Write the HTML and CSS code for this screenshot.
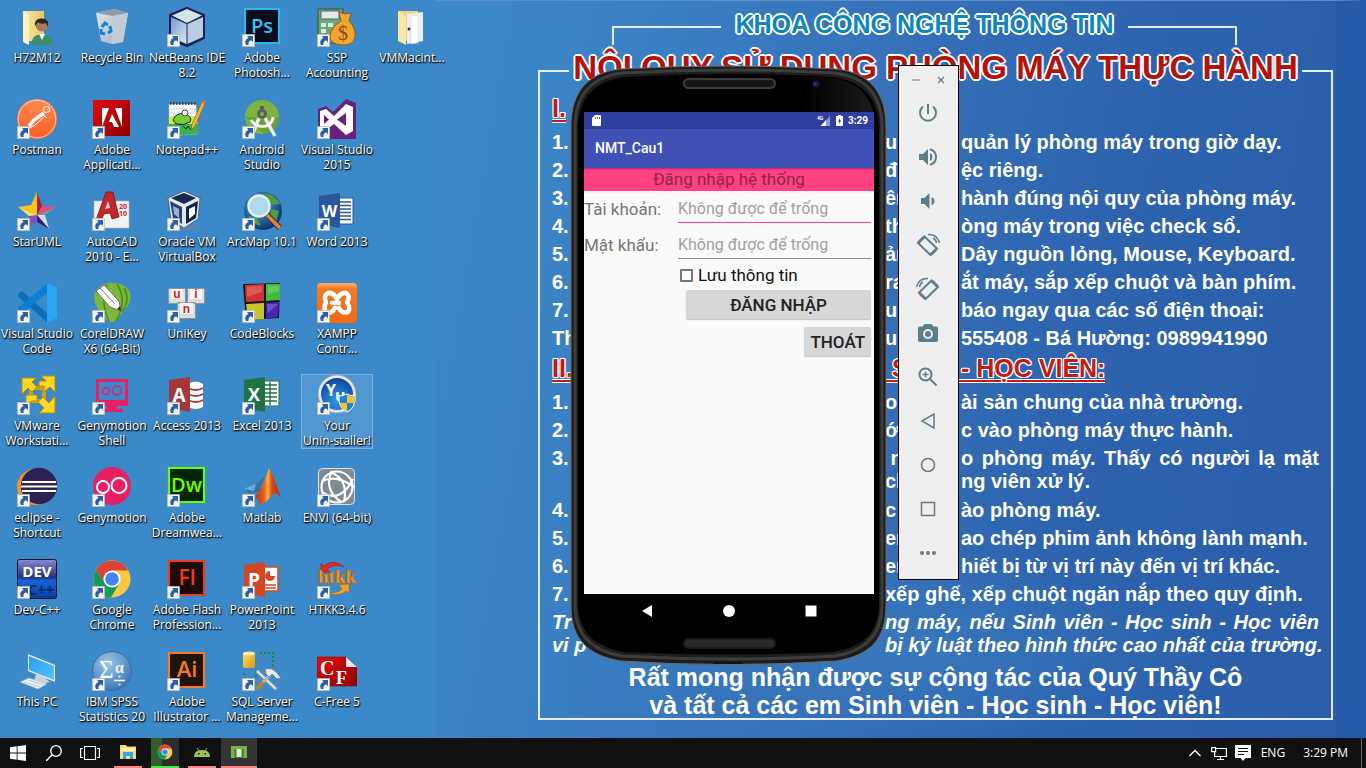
FILE: index.html
```html
<!DOCTYPE html>
<html lang="vi">
<head>
<meta charset="utf-8">
<title>Desktop</title>
<link rel="stylesheet" href="styles.css">
</head>
<body>
<svg class="defs" width="0" height="0" aria-hidden="true">
  <defs>
    <symbol id="sc" viewBox="0 0 13 13"><path fill="#f4f4f2" stroke="#b9b9b9" stroke-width=".8" d="M.4.4h12.2v12.2H.4z"/><path fill="#2b5ea8" d="M5 2h6v6L9 6.300Q6 7.500 6.500 11H4Q1.500 6.500 6.500 3.700Z"/></symbol>
    <linearGradient id="gGlass" x1="0" y1="0" x2="1" y2="1"><stop offset="0" stop-color="#dfe6ec"/><stop offset="1" stop-color="#a4b1bc"/></linearGradient>
    <linearGradient id="gPost" x1="0" y1="0" x2="0" y2="1"><stop offset="0" stop-color="#ff8a4e"/><stop offset="1" stop-color="#fb5f27"/></linearGradient>
    <linearGradient id="gRed" x1="0" y1="0" x2="1" y2="1"><stop offset="0" stop-color="#e40c0c"/><stop offset="1" stop-color="#8d0000"/></linearGradient>
    <linearGradient id="gGold" x1="0" y1="0" x2="1" y2="1"><stop offset="0" stop-color="#ffe35a"/><stop offset="1" stop-color="#d89412"/></linearGradient>
    <linearGradient id="gFolder" x1="0" y1="0" x2="1" y2="0"><stop offset="0" stop-color="#fce9a8"/><stop offset="1" stop-color="#e9c763"/></linearGradient>
    <linearGradient id="gXampp" x1="0" y1="0" x2="0" y2="1"><stop offset="0" stop-color="#ffb27a"/><stop offset=".15" stop-color="#f47a20"/><stop offset="1" stop-color="#f26a11"/></linearGradient>
    <linearGradient id="gDev" x1="0" y1="0" x2="0" y2="1"><stop offset="0" stop-color="#8a8ad0"/><stop offset=".45" stop-color="#28307e"/><stop offset=".55" stop-color="#1464d8"/><stop offset="1" stop-color="#0b3d9c"/></linearGradient>
    <linearGradient id="gMat" x1="0" y1="0" x2="1" y2="0"><stop offset="0" stop-color="#b03a1c"/><stop offset=".35" stop-color="#e8601f"/><stop offset=".5" stop-color="#ffb040"/><stop offset=".65" stop-color="#d8481c"/><stop offset="1" stop-color="#a72c16"/></linearGradient>
    <linearGradient id="gCube" x1="0" y1="0" x2="1" y2="1"><stop offset="0" stop-color="#6f9bd0"/><stop offset="1" stop-color="#dbe7f2"/></linearGradient>
    <radialGradient id="gYu" cx=".5" cy=".7" r=".7"><stop offset="0" stop-color="#2f9be8"/><stop offset="1" stop-color="#0c3f96"/></radialGradient>
    <radialGradient id="gGlobe" cx=".4" cy=".35" r=".7"><stop offset="0" stop-color="#4aa8e8"/><stop offset="1" stop-color="#08306c"/></radialGradient>
    <radialGradient id="gSpss" cx=".4" cy=".3" r=".8"><stop offset="0" stop-color="#9cc8ea"/><stop offset="1" stop-color="#2f6fb0"/></radialGradient>
    <linearGradient id="gScreen" x1="0" y1="0" x2="1" y2="1"><stop offset="0" stop-color="#2b9cf0"/><stop offset="1" stop-color="#58c0ff"/></linearGradient>
    <symbol id="chrome" viewBox="0 0 40 40"><circle cx="20" cy="20" r="18.500" fill="#fbc940"/><path fill="#db4437" d="M4 10.800A18.500 18.500 0 0 1 36.300 11.500H20L12 24.500Z"/><path fill="#0f9d58" d="M4 10.800 12.500 24.300 27.500 24 19 38.500A18.500 18.500 0 0 1 4 10.800Z"/><circle cx="20" cy="20" r="8.600" fill="#fff"/><circle cx="20" cy="20" r="6.800" fill="#4285f4"/></symbol>
  </defs>
</svg>

<div class="screen">
<main class="desktop">

  <section class="poster" aria-label="Nội quy phòng máy">
    <div class="crown"><i class="bracket bl"></i><h2>KHOA CÔNG NGHỆ THÔNG TIN</h2><i class="bracket br"></i></div>
    <div class="banner"><i class="corner bl"></i><h1>NỘI QUY SỬ DỤNG PHÒNG MÁY THỰC HÀNH</h1><i class="corner br"></i></div>
    <div class="rules">
      <h3 class="part short"><span>I.</span></h3>
      <p class="rule"><span>1.</span><span>u</span><span>quản lý phòng máy trong giờ dạy.</span></p>
      <p class="rule"><span>2.</span><span>đi</span><span>ệc riêng.</span></p>
      <p class="rule"><span>3.</span><span>ên</span><span>hành đúng nội quy của phòng máy.</span></p>
      <p class="rule"><span>4.</span><span>th</span><span>òng máy trong việc check sổ.</span></p>
      <p class="rule"><span>5.</span><span>ản</span><span>Dây nguồn lỏng, Mouse, Keyboard.</span></p>
      <p class="rule"><span>6.</span><span>ra</span><span>ắt máy, sắp xếp chuột và bàn phím.</span></p>
      <p class="rule"><span>7.</span><span>u</span><span>báo ngay qua các số điện thoại:</span></p>
      <p class="rule"><span>Th</span><span>uc</span><span>555408 - Bá Hường: 0989941990</span></p>
      <h3 class="part rule"><span>II.</span><span>&nbsp;S</span><span>- HỌC VIÊN:</span></h3>
      <p class="rule"><span>1.</span><span>o</span><span>ài sản chung của nhà trường.</span></p>
      <p class="rule"><span>2.</span><span>ớ</span><span>c vào phòng máy thực hành.</span></p>
      <p class="rule tight spread"><span>3.</span><span>&nbsp;n</span><span>o phòng máy. Thấy có người lạ mặt</span></p>
      <p class="rule tight"><span></span><span>ch</span><span>ng viên xử lý.</span></p>
      <p class="rule"><span>4.</span><span>c u</span><span>ào phòng máy.</span></p>
      <p class="rule"><span>5.</span><span>en</span><span>ao chép phim ảnh không lành mạnh.</span></p>
      <p class="rule"><span>6.</span><span>en</span><span>hiết bị từ vị trí này đến vị trí khác.</span></p>
      <p class="rule wide"><span>7.</span><span>xếp ghế, xếp chuột ngăn nắp theo quy định.</span></p>
      <p class="rule wide tight slant spread"><span>Tr</span><span>ng máy, nếu Sinh viên - Học sinh - Học viên</span></p>
      <p class="rule wide tight slant"><span>vi p</span><span>bị kỷ luật theo hình thức cao nhất của trường.</span></p>
      <p class="closing">Rất mong nhận được sự cộng tác của Quý Thầy Cô<br>và tất cả các em Sinh viên - Học sinh - Học viên!</p>
    </div>
  </section>

  <nav class="icons" aria-label="Desktop">
    <a class="item" href="#"><span class="pic"><svg viewBox="0 0 40 40"><path fill="url(#gFolder)" d="M6 4h21v30H6z"/><path fill="#fff3c4" d="M6 4 12 8V38L6 35Z"/><circle cx="25" cy="18" r="6.500" fill="#a8795c"/><path fill="#2b2622" d="M18 19Q17 11 25 11.500 33 12 31 20L29 16Q24 18 21 15Z"/><path fill="#3a8f6c" d="M14 38Q15 27 25 27 35 27 36 38Z"/><path fill="#fff" d="M22 27h6l-3 6z"/></svg></span><span class="label">H72M12</span></a>
    <a class="item" href="#"><span class="pic"><svg viewBox="0 0 40 40"><path fill="url(#gPost)" d="M20 0a20 20 0 1 0 0 40 20 20 0 0 0 0-40"/><circle cx="20" cy="20" r="18.800" fill="none" stroke="#ffd9c6" stroke-width=".8"/><path fill="none" stroke="#fff" stroke-width="3.600" d="M27 14 17 21 12 27"/><path fill="none" stroke="#fff" stroke-width="1" d="M28 17 18 26 9 31M24 14l6 5"/><circle cx="29.500" cy="10.500" r="3.200" fill="#ff8a58" stroke="#fff"/></svg><svg class="arrow"><use href="#sc"/></svg></span><span class="label">Postman</span></a>
    <a class="item" href="#"><span class="pic"><svg viewBox="0 0 40 40"><path fill="#f7c51e" d="M20 1 14 14 1 16 20 24Z"/><path fill="#b01f2c" d="M20 1 20 24 25 15Z"/><path fill="#e34b7d" d="M25 15 39 16 20 24Z"/><path fill="#8f9296" d="M39 16 28 24 20 24Z"/><path fill="#d9dce0" d="M28 24 32 38 20 24Z"/><path fill="#33216e" d="M20 24V31L32 38Z"/><path fill="#7e50c8" d="M20 24V31L8 38 12 25Z"/><path fill="#ffdf60" d="M1 16 20 24 12 25Z"/></svg><svg class="arrow"><use href="#sc"/></svg></span><span class="label">StarUML</span></a>
    <a class="item" href="#"><span class="pic"><svg viewBox="0 0 40 40"><path fill="#0a6fb8" d="M1 11 5 8 31 31V40L1 13.500Z"/><path fill="#0d7fce" d="M1 27 5 31 31 9V0L1 24.500Z"/><path fill="#29a5f2" d="M30 0 40 5V35L30 40Z"/></svg><svg class="arrow"><use href="#sc"/></svg></span><span class="label">Visual Studio<br>Code</span></a>
    <a class="item" href="#"><span class="pic"><svg viewBox="0 0 40 40"><path fill="none" stroke="#d99e0a" stroke-width="4" d="M14 13h13v13H14z"/><g fill="#fbd824" stroke="#b98a08" stroke-width="1"><path d="M5 3h14l-4 4 5 5-5 5-4-4-6 6Z"/><path d="M38 1v16l-5-5-6 5v-6h-5V6h7l-5-5Z"/><path d="M38 21v17H22l5-5-6-6 5-5 6 6Z"/><path d="M9 20h11v6h-5l-6 3Z"/></g></svg><svg class="arrow"><use href="#sc"/></svg></span><span class="label">VMware<br>Workstati...</span></a>
    <a class="item" href="#"><span class="pic"><svg viewBox="0 0 40 40"><circle cx="18" cy="20" r="18" fill="#f7941e"/><circle cx="22" cy="19" r="18.200" fill="#2c2255"/><path stroke="#fff" stroke-width="2.200" d="M5 15h34M4 19.500h36M5 24h34"/></svg><svg class="arrow"><use href="#sc"/></svg></span><span class="label">eclipse -<br>Shortcut</span></a>
    <a class="item" href="#"><span class="pic"><svg viewBox="0 0 40 40"><rect x=".5" y=".5" width="39" height="39" rx="2" fill="url(#gDev)" stroke="#11151f"/><text x="20" y="18" text-anchor="middle" font-family="Open Sans" font-weight="700" font-size="15" fill="#fff">DEV</text><text x="24" y="36" text-anchor="middle" font-family="Open Sans" font-weight="700" font-size="15" fill="#082a66">C++</text></svg><svg class="arrow"><use href="#sc"/></svg></span><span class="label">Dev-C++</span></a>
    <a class="item" href="#"><span class="pic"><svg viewBox="0 0 40 40"><path fill="#e8eef3" d="M11 3 38 14V31L11 20Z"/><path fill="url(#gScreen)" d="M12 5 37 15V29L12 19Z"/><path fill="#c9d2da" d="M19 23 27 26 33 31 25 33 17 30Z"/><path fill="#edf1f4" stroke="#a9b4bd" stroke-width=".6" d="M3 31 12 27 30 33 21 38Z"/><path stroke="#9fb0bd" stroke-width=".6" d="M7 31l16 5M11 29l16 5"/></svg></span><span class="label">This PC</span></a>

    <a class="item" href="#"><span class="pic"><svg viewBox="0 0 40 40"><path fill="url(#gGlass)" d="M4 6 22 2 36 6 31 35 20 37 9 34Z"/><path fill="#8f9daa" d="M4 6 22 2 36 6 21 9Z"/><path fill="#c2ccd5" d="M21 9 36 6 31 35 20 37Z"/><g fill="none" stroke="#1482d8" stroke-width="3"><path d="M10 20l3-4 3 2M18 19l1 5-3 2M13 27l-4-1v-4"/></g></svg></span><span class="label">Recycle Bin</span></a>
    <a class="item" href="#"><span class="pic"><svg viewBox="0 0 40 40"><path fill="url(#gRed)" d="M1 1h37v36H1z"/><path fill="#fff" d="M10 9h7L10 28ZM23 9h7V28ZM20 15 27 28H22L20 23H17Z"/></svg><svg class="arrow"><use href="#sc"/></svg></span><span class="label">Adobe<br>Applicati...</span></a>
    <a class="item" href="#"><span class="pic"><svg viewBox="0 0 40 40"><path fill="#f1f1f1" stroke="#bbb" stroke-width=".6" d="M2 10h35v27H2z"/><path fill="#c3272b" stroke="#7c1416" stroke-width=".8" d="M14 1H21L27 26 20 28 18 22 12 23 9 30 4 29Z"/><path fill="#f1d5d5" d="M16 10 18 17 13 18Z"/><text x="27" y="18" font-family="Open Sans" font-weight="700" font-size="7" fill="#c3272b">20</text><text x="27" y="25" font-family="Open Sans" font-weight="700" font-size="7" fill="#c3272b">10</text></svg><svg class="arrow"><use href="#sc"/></svg></span><span class="label">AutoCAD<br>2010 - E...</span></a>
    <a class="item" href="#"><span class="pic"><svg viewBox="0 0 40 40"><path fill="#7cb93a" d="M20 0C42 0 42 18 32 28 27 33 25 39 20 39S11 33 7 27C-3 15 3 0 20 0"/><path fill="none" stroke="#4d8a20" stroke-width="1.500" d="M25 1Q36 18 24 38M15 1Q8 20 17 38M32 5Q39 17 30 29"/><path fill="#fff" stroke="#555" stroke-width=".8" d="M4 8 12 2 27 18 29 28 18 24Z"/><path stroke="#777" d="M8 5 23 21"/><path fill="#333" d="M29 28l-4-2 3-3z"/></svg><svg class="arrow"><use href="#sc"/></svg></span><span class="label">CorelDRAW<br>X6 (64-Bit)</span></a>
    <a class="item" href="#"><span class="pic"><svg viewBox="0 0 40 40"><path fill="none" stroke="#e91e63" stroke-width="3" d="M5.500 5.500h29v24h-29z"/><path fill="#e91e63" d="M4 25h32v6H4zM15 31h10v3h6v3H9v-3h6z"/><g fill="none" stroke="#e91e63" stroke-width="1.500"><circle cx="14" cy="16" r="3.500"/><circle cx="25" cy="15.500" r="4.500"/></g></svg><svg class="arrow"><use href="#sc"/></svg></span><span class="label">Genymotion<br>Shell</span></a>
    <a class="item" href="#"><span class="pic"><svg viewBox="0 0 40 40"><circle cx="20" cy="19" r="19" fill="#e91e63"/><g fill="none" stroke="#fff" stroke-width="2"><circle cx="11" cy="20" r="6"/><circle cx="27" cy="18.500" r="7.500"/></g></svg><svg class="arrow"><use href="#sc"/></svg></span><span class="label">Genymotion</span></a>
    <a class="item" href="#"><span class="pic"><svg viewBox="0 0 40 40"><use href="#chrome"/></svg><svg class="arrow"><use href="#sc"/></svg></span><span class="label">Google<br>Chrome</span></a>
    <a class="item" href="#"><span class="pic"><svg viewBox="0 0 40 40"><circle cx="20" cy="20" r="19.500" fill="url(#gSpss)" stroke="#3b6ea5"/><text x="7" y="27" font-family="Liberation Serif" font-size="25" fill="#fff">Σ</text><text x="23" y="22" font-family="Liberation Serif" font-weight="700" font-size="16" fill="#e8f3fb">α</text><path stroke="#fff" stroke-width="1.500" d="M22 29.500h11M26.500 25.500h2M26.500 33.500h2"/></svg><svg class="arrow"><use href="#sc"/></svg></span><span class="label">IBM SPSS<br>Statistics 20</span></a>

    <a class="item" href="#"><span class="pic"><svg viewBox="0 0 40 40"><path fill="#1b1f55" stroke="#1b1f55" stroke-width="2" stroke-linejoin="round" d="M20 1 37 8V31L20 39 3 32V8Z"/><path fill="#cfe6e2" d="M20 2 35 8.500 20 16 5 8.500Z"/><path fill="url(#gCube)" d="M4 10 19.500 17V37L4 30.500Z"/><path fill="#b9cde4" d="M20.500 17 36 10V30L20.500 37Z"/></svg><svg class="arrow"><use href="#sc"/></svg></span><span class="label">NetBeans IDE<br>8.2</span></a>
    <a class="item" href="#"><span class="pic"><svg viewBox="0 0 40 40"><path fill="#fdfdfd" stroke="#aaa" stroke-width=".6" d="M2 5h27l2 30-29 2Z"/><path fill="#d3ea48" d="M2 17h28v8H2z"/><path fill="#35b44a" d="M2 25h29v10l-29 2z"/><path stroke="#333" stroke-dasharray="1.500 1.500" stroke-width="2.500" d="M3 4.500h26"/><path stroke="#a9c4e8" stroke-width=".7" d="M3 10h26M3 14h26"/><path fill="#78cf3c" stroke="#222" stroke-width="1" d="M6 21Q9 13 18 15 26 18 23 23 17 27 9 25Z"/><circle cx="18" cy="14" r="3" fill="#fff" stroke="#222" stroke-width=".8"/><path fill="none" stroke="#222" d="M16 27l3 3 2-3 3 4 2-3"/><path fill="#f5b62c" stroke="#8e5a10" stroke-width=".6" d="M35 3l3 1.500L28 27l-4 4 1-6Z"/><path fill="#d86a5f" d="M35 3l1-2 3 1-1 2.500z"/></svg><svg class="arrow"><use href="#sc"/></svg></span><span class="label">Notepad++</span></a>
    <a class="item" href="#"><span class="pic"><svg viewBox="0 0 40 40"><ellipse cx="19" cy="36" rx="11" ry="3.500" fill="#5d7fae"/><path fill="#dfe7f0" stroke="#23395f" stroke-width=".6" d="M17 0 33 7 31 28 17 37 4 29 1 7Z"/><path fill="#16294c" d="M17 2 29 7 17 13 4 7Z"/><path fill="#2a4474" d="M3 10 15 16V33L6 27Z"/><path fill="#122340" d="M19 16 31 10 29 27 19 33Z"/><path fill="#fff" d="M22 18 28 15V23L22 28Z"/><path fill="#9fb3d0" d="M6 15 12 18V27L7 23Z"/></svg><svg class="arrow"><use href="#sc"/></svg></span><span class="label">Oracle VM<br>VirtualBox</span></a>
    <a class="item" href="#"><span class="pic"><svg viewBox="0 0 40 40"><g fill="#dedede" stroke="#8e8e8e" stroke-width=".8"><path d="M1.500 5.500h17v15h-17zM20.500 5.500h17v15h-17zM10.500 19.500h18v16h-18z"/></g><path fill="#f6f6f6" d="M4 6h12v10H4zM23 6h12v10H23zM13 20h13v11H13z"/><g font-family="Liberation Sans" font-weight="700" font-size="12" fill="#e01818" text-anchor="middle"><text x="10" y="15">u</text><text x="29" y="15">i</text><text x="19.500" y="30">n</text></g></svg><svg class="arrow"><use href="#sc"/></svg></span><span class="label">UniKey</span></a>
    <a class="item" href="#"><span class="pic"><svg viewBox="0 0 40 40"><path fill="#fff" d="M21 9Q29 4 36 9V32Q29 36 21 32Z"/><path fill="none" stroke="#a4373a" stroke-width="1.800" d="M21 13Q29 17 36 13M21 19Q29 23 36 19M21 25Q29 29 36 25"/><path fill="#a4373a" d="M2 5 23 2V37L2 33Z"/><text x="12" y="27" text-anchor="middle" font-family="Open Sans" font-weight="700" font-size="19" fill="#fff">A</text></svg><svg class="arrow"><use href="#sc"/></svg></span><span class="label">Access 2013</span></a>
    <a class="item" href="#"><span class="pic"><svg viewBox="0 0 40 40"><path fill="#072401" stroke="#6aff00" stroke-width="2.200" d="M2 1h35v34H2z"/><text x="19.500" y="25" text-anchor="middle" font-family="Open Sans" font-weight="600" font-size="20" fill="#6aff00">Dw</text></svg><svg class="arrow"><use href="#sc"/></svg></span><span class="label">Adobe<br>Dreamwea...</span></a>
    <a class="item" href="#"><span class="pic"><svg viewBox="0 0 40 40"><path fill="#1b0c0c" stroke="#f23a14" stroke-width="2.200" d="M2 2h35v34H2z"/><text x="20" y="26" text-anchor="middle" font-family="Open Sans" font-weight="600" font-size="21" fill="#f23a14">Fl</text></svg><svg class="arrow"><use href="#sc"/></svg></span><span class="label">Adobe Flash<br>Profession...</span></a>
    <a class="item" href="#"><span class="pic"><svg viewBox="0 0 40 40"><path fill="#1e140b" stroke="#f87a1e" stroke-width="2.200" d="M2 2h35v34H2z"/><text x="20" y="26" text-anchor="middle" font-family="Open Sans" font-weight="600" font-size="22" fill="#f87a1e">Ai</text></svg><svg class="arrow"><use href="#sc"/></svg></span><span class="label">Adobe<br>Illustrator ...</span></a>

    <a class="item" href="#"><span class="pic"><svg viewBox="0 0 40 40"><path fill="#0c0c1f" stroke="#28b9e9" stroke-width="2.200" d="M3 2h34v34H3z"/><text x="20" y="26" text-anchor="middle" font-family="Open Sans" font-weight="600" font-size="20" fill="#31c5f0">Ps</text></svg><svg class="arrow"><use href="#sc"/></svg></span><span class="label">Adobe<br>Photosh...</span></a>
    <a class="item" href="#"><span class="pic"><svg viewBox="0 0 40 40"><circle cx="20" cy="18" r="17" fill="#7fb341"/><path fill="#6fa036" d="M3 18h34A17 17 0 0 1 22 35Z"/><circle cx="20" cy="15" r="3.500" fill="none" stroke="#5a5f62" stroke-width="3"/><path fill="#5a5f62" d="M18 7h4v4h-4z"/><path fill="none" stroke="#ededed" stroke-width="3.500" d="M17 19 11 34M23 19 33 37"/><path fill="none" stroke="#f4f4f4" stroke-width="3" d="M9 21Q14 29 24 27 31 24 31 18"/></svg><svg class="arrow"><use href="#sc"/></svg></span><span class="label">Android<br>Studio</span></a>
    <a class="item" href="#"><span class="pic"><svg viewBox="0 0 40 40"><circle cx="21" cy="20" r="19" fill="url(#gGlobe)"/><path fill="#4d9d45" d="M22 2Q33 3 38 13L31 14 26 9ZM29 18l8 2-3 11-6-3ZM6 25l9 2 4 8-9-3Z"/><circle cx="17" cy="15" r="10.500" fill="#bfe6f4" fill-opacity=".85" stroke="#ececec" stroke-width="2.500"/><path stroke="#4a2a12" stroke-width="5.500" d="M25 24 38 37"/><path stroke="#d98642" stroke-width="3.500" d="M25 24 38 37"/></svg><svg class="arrow"><use href="#sc"/></svg></span><span class="label">ArcMap 10.1</span></a>
    <a class="item" href="#"><span class="pic"><svg viewBox="0 0 40 40"><path fill="#141414" d="M1 1 38 0 37 35 4 37Z"/><path fill="#d33232" d="M3 2 22 1V18L4 19Z"/><path fill="#3fbe3a" d="M24 1H38V17L24 18Z"/><path fill="#c9c42c" d="M4 21 22 20V36L6 37Z"/><path fill="#4a26b4" d="M24 20 37 19 36 34 24 36Z"/><path fill="#fff" fill-opacity=".2" d="M5 4 20 3V9L5 14ZM26 3H37V8L26 11ZM25 21 36 21 26 30Z"/></svg><svg class="arrow"><use href="#sc"/></svg></span><span class="label">CodeBlocks</span></a>
    <a class="item" href="#"><span class="pic"><svg viewBox="0 0 40 40"><path fill="#fff" stroke="#1f7244" d="M20 6h17v25H20z"/><path stroke="#1f7244" stroke-width="1.400" d="M22 10h13M22 14h13M22 18h13M22 22h13M22 26h13M28 7v23"/><path fill="#1f7244" d="M2 5 23 2V37L2 33Z"/><text x="12" y="26" text-anchor="middle" font-family="Open Sans" font-weight="700" font-size="18" fill="#fff">X</text></svg><svg class="arrow"><use href="#sc"/></svg></span><span class="label">Excel 2013</span></a>
    <a class="item" href="#"><span class="pic"><svg viewBox="0 0 40 40"><path fill="#3273a8" d="M1 22 14 17 23 9 17 25 8 27Z"/><path fill="#5fb0dc" d="M1 22 14 17 12 24Z"/><path fill="url(#gMat)" d="M13 30Q21 20 27 1 33 12 39 31 34 23 29 29 24 37 17 37 17 32 13 30"/></svg><svg class="arrow"><use href="#sc"/></svg></span><span class="label">Matlab</span></a>
    <a class="item" href="#"><span class="pic"><svg viewBox="0 0 40 40"><path fill="#fff" stroke="#d24726" stroke-width="1.500" d="M20 8h16v24H20z"/><circle cx="28" cy="17" r="5" fill="#d24726"/><path fill="#fff" d="M28 17v-6h6v6z"/><path stroke="#d24726" stroke-width="1.500" d="M22 26h12M22 29h12"/><path fill="#d24726" d="M2 6 23 3V38L2 34Z"/><text x="12" y="28" text-anchor="middle" font-family="Open Sans" font-weight="700" font-size="19" fill="#fff">P</text></svg><svg class="arrow"><use href="#sc"/></svg></span><span class="label">PowerPoint<br>2013</span></a>
    <a class="item" href="#"><span class="pic"><svg viewBox="0 0 40 40"><rect x="1" y="1" width="12" height="16" rx="2" fill="url(#gGold)"/><ellipse cx="7" cy="2.500" rx="6" ry="2" fill="#fff0a0"/><path fill="none" stroke="#1e8a2a" stroke-width="2" stroke-dasharray="2 2" d="M18 2h13v14M2 22v5M14 20v8"/><path stroke="#8c97a3" stroke-width="4" d="M15 20 34 38"/><path stroke="#dde5ec" stroke-width="2" d="M15 20 34 38"/><path stroke="#c08018" stroke-width="4" d="M15 38 22 30"/><path stroke="#aab6c2" stroke-width="3" d="M21 31 29 23"/><path fill="#e5ebf0" stroke="#687482" stroke-width=".8" d="M23 18Q30 16 35 22l4 5-4 1-5-5-3 3-3-3z"/></svg><svg class="arrow"><use href="#sc"/></svg></span><span class="label">SQL Server<br>Manageme...</span></a>

    <a class="item" href="#"><span class="pic"><svg viewBox="0 0 40 40"><path fill="#6fa77a" stroke="#3f6b49" stroke-width="1.500" d="M1 2h25v34H1z"/><path fill="#dfe9ee" stroke="#4d6470" d="M4 4h18v8H4z"/><path fill="#d7efd9" d="M4 16h5v4H4zM11 16h5v4h-5zM4 22h5v4H4z"/><path fill="#f2a52f" stroke="#9c5a0d" d="M22 5l6 2 6-1-2 8Q39 21 38 30 36 39 25 38 13 37 13 30 14 20 24 14Z"/><text x="26" y="33" text-anchor="middle" font-family="Liberation Serif" font-size="20" fill="#8a4a08">$</text></svg><svg class="arrow"><use href="#sc"/></svg></span><span class="label">SSP<br>Accounting</span></a>
    <a class="item" href="#"><span class="pic"><svg viewBox="0 0 40 40"><path fill="#68217a" d="M1 10 9 7 16 13 29 0 39 4V40H13V28L9 32 1 28Z"/><path fill="#fff" d="M3 12 9 10 17 17 29 5 36 8V32L29 36 17 25 9 31 3 28Z"/><path fill="#68217a" d="M7 16 12 20.500 7 25ZM29 14V27L20 20.500Z"/></svg><svg class="arrow"><use href="#sc"/></svg></span><span class="label">Visual Studio<br>2015</span></a>
    <a class="item" href="#"><span class="pic"><svg viewBox="0 0 40 40"><path fill="#fff" stroke="#2b579a" d="M20 7h16v26H20z"/><path stroke="#2b579a" stroke-width="1.500" d="M23 11h11M23 14.500h11M23 18h11M23 21.500h11M23 25h11M23 28.500h11"/><path fill="#2b579a" d="M2 5 23 2V37L2 33Z"/><text x="12.500" y="26" text-anchor="middle" font-family="Open Sans" font-weight="700" font-size="16" fill="#fff">W</text></svg><svg class="arrow"><use href="#sc"/></svg></span><span class="label">Word 2013</span></a>
    <a class="item" href="#"><span class="pic"><svg viewBox="0 0 40 40"><rect width="40" height="40" rx="4" fill="url(#gXampp)"/><g fill="none" stroke="#fff" stroke-width="4.500" stroke-linejoin="round" stroke-linecap="round"><path d="M20 16Q16 9 11 10 6 13 9 19 6 26 9 29 15 31 18 25"/><path d="M20 16Q24 9 29 10 34 13 30 19 34 26 31 29 25 31 22 25"/><path d="M15 20h7"/></g></svg><svg class="arrow"><use href="#sc"/></svg></span><span class="label">XAMPP<br>Contr...</span></a>
    <a class="item selected" href="#"><span class="pic"><svg viewBox="0 0 40 40"><circle cx="20" cy="19" r="17.500" fill="url(#gYu)" stroke="#e4e8ec" stroke-width="3"/><circle cx="20" cy="19" r="19" fill="none" stroke="#8e99a4" stroke-width=".7"/><text x="9" y="21" font-family="Open Sans" font-weight="700" font-size="16" fill="#fff">Y</text><text x="18" y="26" font-family="Open Sans" font-weight="700" font-size="16" fill="#fff">u</text><path fill="#1e86d8" stroke="#fff" d="M22 21q4 0 8-2 4 2 8 2 1 12-8 16-9-4-8-16Z"/><path fill="#fbc22e" d="M30 20q4 1.500 7.500 1.500v6.500H30zM22.500 28H30v8.500q-6-2-7.500-8.500Z"/></svg><svg class="arrow"><use href="#sc"/></svg></span><span class="label">Your<br>Unin-staller!</span></a>
    <a class="item" href="#"><span class="pic"><svg viewBox="0 0 40 40"><rect x="1.500" y="1.500" width="36" height="36" rx="4" fill="#7d8b95" stroke="#dce2e6"/><g fill="none" stroke="#fff" stroke-width="2.200"><circle cx="20" cy="20" r="15.500"/><path d="M5 14Q20 7 37 20M13 5Q32 12 27 35M15 4Q6 22 24 35M6 26Q24 36 36 12"/></g></svg><svg class="arrow"><use href="#sc"/></svg></span><span class="label">ENVI (64-bit)</span></a>
    <a class="item" href="#"><span class="pic"><svg viewBox="0 0 40 40"><path fill="#e8281e" stroke="#8d1510" stroke-width=".5" d="M4 13V4l3 3Q17-1 27 8 18 4 10 10l3 3Z"/><text x="20" y="24" text-anchor="middle" font-family="Liberation Serif" font-weight="700" font-size="19" fill="#ff9a10" stroke="#b65808" stroke-width=".5">htkk</text><path fill="#f5a01e" stroke="#a8650c" stroke-width=".5" d="M32 25v9l-3-2Q22 38 12 34q10 0 13-4l-3-4Z"/></svg><svg class="arrow"><use href="#sc"/></svg></span><span class="label">HTKK3.4.6</span></a>
    <a class="item" href="#"><span class="pic"><svg viewBox="0 0 40 40"><path fill="url(#gRed)" stroke="#7a0b0b" stroke-width=".6" d="M0 6h29l11 10v19H0z"/><path fill="#e9e9e9" d="M29 6v10h11z"/><g font-family="Liberation Serif" font-weight="700" fill="#fff"><text x="3" y="24" font-size="20">C</text><text x="19" y="33" font-size="18">F</text></g></svg><svg class="arrow"><use href="#sc"/></svg></span><span class="label">C-Free 5</span></a>

    <a class="item" href="#"><span class="pic"><svg viewBox="0 0 40 40"><path fill="#f3d27a" d="M6 4h20v30H6z"/><path fill="#eceff1" d="M15 7 31 5V34L15 37Z"/><path fill="#fff" stroke="#cfd4d8" stroke-width=".5" d="M19 9 26 8V36L19 37Z"/><path fill="#fae7a8" d="M6 4 14 9V38L6 34Z"/><circle cx="17" cy="22" r="1.500" fill="#333"/></svg></span><span class="label">VMMacint...</span></a>
  </nav>

  <section class="phone" aria-label="Android emulator">
    <svg class="shell" viewBox="0 0 318 601" preserveAspectRatio="none" aria-hidden="true">
      <defs><linearGradient id="gGloss" x1=".5" y1="0" x2="1" y2="0"><stop offset="0" stop-color="#000"/><stop offset="1" stop-color="#1b1b1b"/></linearGradient></defs>
      <path fill="#6f6a66" d="M315 40h1v70h-1zM315 200h2v32h-2z"/>
      <path fill="#1d1d1d" stroke="#716b66" stroke-width="1" d="M1 62C1 26 18 8 50 4Q158-2 267 4C299 8 316 26 316 62V540C316 575 300 590 267 596Q158 603 50 596C18 590 1 575 1 540Z"/>
      <path fill="none" stroke="#3d3d3d" stroke-width="3" d="M5 62C5 30 22 12 52 8Q158 2 265 8C295 12 312 30 312 62V540C312 570 296 586 265 591Q158 597 52 591C22 586 5 570 5 540Z"/>
      <path fill="#000" d="M8 64C8 32 26 16 54 12Q158 6 263 12C291 16 309 32 309 64V538C309 568 293 582 263 587Q158 592 54 587C26 582 8 568 8 538Z"/>
      <path fill="url(#gGloss)" d="M158 10Q220 9 263 13C287 17 304 31 305 60L300 62V47H158Z"/>
      <rect x="114" y="14" width="91" height="9" rx="4.500" fill="#161616" stroke="#3c3c3c" stroke-width="2"/>
      <rect x="114" y="574" width="91" height="9" rx="4.500" fill="#2a2a2a" stroke="#1b1b1b" stroke-width="2"/>
      <circle cx="246" cy="19" r="3.500" fill="#1a1a3c"/><circle cx="245" cy="19" r="1.500" fill="#33366a"/>
      <path fill="#111" d="M143 597h30v2h-30z"/>
    </svg>
    <div class="app">
      <header class="status"><svg class="sd" viewBox="0 0 9 11"><path fill="#fff" d="M3 0h5q1 0 1 1v9q0 1-1 1H1q-1 0-1-1V3z"/><path stroke="#2f3f9f" d="M3.500 2v2M5.500 2v2M7.500 2v2" stroke-width=".7"/></svg><svg class="sig" viewBox="0 0 13 11"><path fill="#8d97d0" d="M13 1v10h-9z"/><path fill="#fff" d="M9 5v6H3.500z"/><text x="0" y="5" font-family="Roboto" font-weight="700" font-size="5" fill="#fff">4G</text></svg><svg class="bat" viewBox="0 0 7 11"><path fill="#fff" d="M2 0h3v1h2v10H0V1h2z"/><path fill="#2f3f9f" d="M4 3 2 6.500h1.200V9L5.200 5.500H4z"/></svg><time>3:29</time></header>
      <h2 class="appbar">NMT_Cau1</h2>
      <p class="heading">Đăng nhập hệ thống</p>
      <form class="login">
        <label for="user">Tài khoản:</label><input class="field active" id="user" type="text" placeholder="Không được để trống">
        <label for="pass">Mật khẩu:</label><input class="field" id="pass" type="password" placeholder="Không được để trống">
        <label class="remember"><input type="checkbox">Lưu thông tin</label>
        <button class="btn signin" type="button">ĐĂNG NHẬP</button>
        <button class="btn quit" type="button">THOÁT</button>
      </form>
      <footer class="keys">
        <button type="button" aria-label="Back"><svg viewBox="0 0 12 12"><path d="M1 6 11 0v12z"/></svg></button>
        <button type="button" aria-label="Home"><svg viewBox="0 0 12 12"><circle cx="6" cy="6" r="6"/></svg></button>
        <button type="button" aria-label="Recents"><svg viewBox="0 0 12 12"><path d="M.5.500h11v11H.500z"/></svg></button>
      </footer>
    </div>
  </section>

  <aside class="tools" aria-label="Emulator controls">
    <div class="caption">
      <button type="button" aria-label="Minimize"><svg viewBox="0 0 8 8"><path d="M0 4h8" stroke="#8aa0aa" stroke-width="1.500"/></svg></button>
      <button type="button" aria-label="Close"><svg viewBox="0 0 8 8"><path d="M1 1l6 6M7 1 1 7" stroke="#61808c" stroke-width="1.300"/></svg></button>
    </div>
    <button type="button" aria-label="Power"><svg viewBox="0 0 24 24"><path class="ln" d="M12 3v10M7 5.500a8 8 0 1 0 10 0"/></svg></button>
    <button type="button" aria-label="Volume up"><svg viewBox="0 0 24 24"><path class="so" d="M3 9v6h4l5 5V4L7 9z"/><path class="so" d="M14 8v8q2.500-1 2.500-4T14 8z"/><path class="ln" d="M14 4.200Q20 6 20 12t-6 7.800"/></svg></button>
    <button type="button" aria-label="Volume down"><svg viewBox="0 0 24 24"><path class="so" d="M5 9v6h3.500l5 5V4l-5 5z"/><path class="so" d="M15.500 8v8q3-1 3-4t-3-4z"/></svg></button>
    <button type="button" aria-label="Rotate left"><svg viewBox="0 0 24 24"><path class="ln" d="M8.500 3.500 21 15.500 14.500 22 2 10z"/><path class="ln wd" d="M15 21.500 20.500 16M2.500 9.500 8 4"/><path class="ln th" d="M12 1.500Q21 1 23.500 10M17 5q3 1.500 3.500 5"/></svg></button>
    <button type="button" aria-label="Rotate right"><svg viewBox="0 0 24 24"><path class="ln" d="M15.500 3.500 3 15.500 9.500 22 22 10z"/><path class="ln wd" d="M9 21.500 3.500 16M21.500 9.500 16 4"/><path class="ln th" d="M12 1.500Q3 1 .500 10M7 5Q4 6.500 3.500 10"/></svg></button>
    <button type="button" aria-label="Screenshot"><svg viewBox="0 0 24 24"><path class="so" d="M8.500 3h7l2 2.500H20q2 0 2 2V19q0 2-2 2H4q-2 0-2-2V7.500q0-2 2-2h2.500z"/><circle cx="12" cy="13" r="4" fill="none" stroke="#efefef" stroke-width="2"/></svg></button>
    <button type="button" aria-label="Zoom"><svg viewBox="0 0 24 24"><circle class="ln" cx="9.500" cy="9.500" r="6"/><path class="ln th" d="M6.500 9.500h6M9.500 6.500v6"/><path class="ln" d="m14 14 6.500 6.500"/></svg></button>
    <button type="button" aria-label="Back"><svg viewBox="0 0 24 24"><path class="ln th" d="M6 12 18 5v14z"/></svg></button>
    <button type="button" aria-label="Home"><svg viewBox="0 0 24 24"><circle class="ln th" cx="12" cy="12" r="6.500"/></svg></button>
    <button type="button" aria-label="Overview"><svg viewBox="0 0 24 24"><path class="ln th" d="M5.500 5.500h13v13h-13z"/></svg></button>
    <button type="button" aria-label="More"><svg viewBox="0 0 24 24"><circle class="so" cx="6" cy="12" r="2"/><circle class="so" cx="12" cy="12" r="2"/><circle class="so" cx="18" cy="12" r="2"/></svg></button>
  </aside>
</main>

<footer class="taskbar">
  <div class="apps">
    <button class="sys" type="button" aria-label="Start"><svg viewBox="0 0 16 16"><path fill="#fff" d="M0 2.300 6.700 1.300V7.600H0zM7.500 1.200 16 0v7.600H7.500zM0 8.400h6.700v6.300L0 13.700zM7.500 8.400H16V16l-8.500-1.200z"/></svg></button>
    <button class="sys" type="button" aria-label="Search"><svg viewBox="0 0 16 16"><circle cx="10" cy="6" r="5.300" fill="none" stroke="#fff" stroke-width="1.300"/><path stroke="#fff" stroke-width="1.500" d="M6.200 9.800 0 16"/></svg></button>
    <button class="sys" type="button" aria-label="Task view"><svg class="wide" viewBox="0 0 20 16"><path fill="none" stroke="#fff" stroke-width="1.200" d="M4.500 1.500h11v13h-11zM3 3.500H.600v9H3M17 3.500h2.400v9H17"/></svg></button>
    <button class="task" type="button" aria-label="File Explorer"><svg viewBox="0 0 16 16"><path fill="#f8d775" d="M0 1h6l1 1.500h9V15H0z"/><path fill="#fff1b8" d="M1 4h14v3H1z"/><path fill="#2fa8e6" d="M3 8h10v7h-3v-3H6v3H3z"/></svg></button>
    <button class="task green" type="button" aria-label="Chrome"><svg viewBox="0 0 40 40"><use href="#chrome"/></svg></button>
    <button class="task" type="button" aria-label="Android Studio"><svg viewBox="0 0 16 16"><path fill="#9bc25c" d="M0 13q0-7 8-7t8 7z"/><path stroke="#9bc25c" d="m3 4 2 3M13 4l-2 3"/><path fill="#111" d="M4 9h1.500v1.500H4zM10.500 9H12v1.500h-1.500z"/></svg></button>
    <button class="task current" type="button" aria-label="Emulator"><svg viewBox="0 0 16 16"><path fill="#7eb045" d="M0 2h16v12H0z"/><path fill="#4c7a28" d="M3.500 5h9v9h-9z"/><path fill="#e6e6e6" d="M5.500 5h5v8h-5z"/></svg></button>
  </div>
  <div class="tray">
    <button type="button" aria-label="Show hidden icons"><svg viewBox="0 0 16 16"><path fill="none" stroke="#fff" stroke-width="1.300" d="m2.500 11 5.500-5.500 5.500 5.500"/></svg></button>
    <button type="button" aria-label="Network"><svg viewBox="0 0 16 16"><path fill="none" stroke="#fff" stroke-width="1.200" d="M5 3.500h10.400v8H3.600V7M9.500 12v2.500M6 14.500h7M.600 2.600h4v4h-4z"/></svg></button>
    <button type="button" aria-label="Notifications"><svg viewBox="0 0 16 16"><path fill="#fff" d="M0 0h16v13h-5.500L8 16l-2.500-3H0z"/><path stroke="#111" stroke-width="1.200" d="M3 3.500h10M3 6.500h10M3 9.500h6"/></svg></button>
    <span class="lang">ENG</span><time class="clock">3:29 PM</time><i class="peek"></i>
  </div>
</footer>
</div>
</body>
</html>
```
FILE: styles.css
```css
* { box-sizing: border-box; }
body, h1, h2, h3, p { margin: 0; }
body { background: #3c89c9; }
button { padding: 0; border: 0; background: none; font: inherit; color: inherit; display: flex; align-items: center; justify-content: center; }
svg { display: block; }
.defs { position: absolute; }

.screen { min-height: 100vh; display: grid; grid-template-rows: 1fr auto; }
.desktop {
  position: relative;
  overflow: hidden;
  display: flex;
  justify-content: flex-end;
  background: #3c89c9;
}

/* wallpaper */
.poster {
  flex: none;
  padding: 0 3px 0 102px;
  border-right: 30px solid #255aa8;
  border-top: 1px solid #5c8fc9;
  background:
    radial-gradient(ellipse 330px 100px at 50% 88%, #3878bc 0%, transparent 100%),
    linear-gradient(100deg, #3c89c9 0%, #3b82c5 18%, #3671b9 45%, #2d62ae 72%, #2a5eab 100%);
  color: #fff;
  font-family: "Liberation Sans", Arial, sans-serif;
  font-weight: 700;
}
.crown, .banner { display: flex; justify-content: center; width: 795px; }
.crown { height: 46px; gap: 14px; align-items: center; padding-right: 22px; }
.bracket { width: 109px; height: 19px; margin-top: 22px; border-top: 2px solid #e6eefa; }
.bl { border-left: 2px solid #e6eefa; }
.br { border-right: 2px solid #e6eefa; }
.crown h2 {
  font-size: 25px;
  line-height: 46px;
  white-space: nowrap;
  color: #0f86bd;
  text-shadow: 1px 1px #fff, -1px -1px #fff, 1px -1px #fff, -1px 1px #fff, 2px 0 #fff, -2px 0 #fff, 0 2px #fff, 0 -2px #fff;
}
.banner { height: 42px; align-items: flex-end; }
.corner { flex: 1; height: 19px; border-top: 2px solid #e6eefa; }
.banner h1 {
  padding: 0 4px;
  font-size: 33px;
  line-height: 42px;
  white-space: nowrap;
  color: #b5120c;
  text-shadow: 1px 1px #fff, -1px -1px #fff, 1px -1px #fff, -1px 1px #fff, 2px 0 #fff, -2px 0 #fff, 0 2px #fff, 0 -2px #fff;
}
.rules { width: 795px; padding: 3px 12px 0; border: 2px solid #e6eefa; border-top: 0; }
.rule { display: grid; grid-template-columns: 333px 76px 1fr; font-size: 20px; line-height: 28px; white-space: nowrap; }
.rule.wide { grid-template-columns: 333px 1fr; }
.tight { height: 23px; line-height: 23px; }
.spread { margin-top: 3px; }
.tight + .rule:not(.tight) { margin-top: 3px; }
.slant { font-style: italic; }
.spread > :last-child { text-align: justify; text-align-last: justify; white-space: normal; }
.part {
  width: max-content;
  height: 36px;
  font-size: 25px;
  line-height: 32px;
  color: #c51a10;
  text-shadow: 1px 1px #fff, -1px -1px #fff, 1px -1px #fff, -1px 1px #fff, 1px 0 #fff, -1px 0 #fff, 0 1px #fff, 0 -1px #fff;
  background: linear-gradient(#fff 1px, #c51a10 1px 3px, #fff 3px) 0 27px / 100% 4px no-repeat;
}
.part.rule { font-size: 25px; line-height: 32px; }
.closing { margin-bottom: -1px; padding-top: 6px; font-size: 25px; line-height: 28px; text-align: center; white-space: nowrap; }

/* shortcuts */
.icons {
  position: absolute;
  inset: 0 auto auto 0;
  display: grid;
  grid-auto-flow: column;
  grid-template-rows: repeat(8, 92px);
  grid-auto-columns: 75px;
}
.item { display: flex; flex-direction: column; align-items: center; padding: 7px 1px 0 0; color: #fff; text-decoration: none; }
.pic { position: relative; width: 40px; height: 40px; }
.pic > svg { width: 40px; height: 40px; }
.pic > .arrow { position: absolute; left: 0; bottom: 0; width: 13px; height: 13px; }
.label {
  margin-top: 3px;
  font-family: "Open Sans", "Noto Sans", sans-serif;
  font-size: 12px;
  line-height: 15px;
  text-align: center;
  white-space: nowrap;
  text-shadow: 1px 1px 1px #000, 0 1px 2px #000;
}
.selected { margin: 6px 2px 11px 1px; padding: 0; border: 1px solid #7db3e0; background: #5197d2; }

/* emulator window */
.phone { position: absolute; left: 570px; top: 65px; width: 318px; padding: 47px 14px 38px; }
.shell { position: absolute; inset: 0; width: 100%; height: 100%; }
.app { position: relative; display: flex; flex-direction: column; height: 516px; background: #fafafa; font-family: Roboto, sans-serif; }
.status { display: flex; align-items: center; height: 17px; padding: 0 6px 0 8px; background: #303f9f; color: #fff; }
.status .sd { width: 9px; height: 11px; margin-right: auto; }
.status .sig { width: 13px; height: 11px; }
.status .bat { width: 7px; height: 11px; margin: 0 5px 0 6px; }
.status time { font-size: 10px; font-weight: 700; }
.appbar { padding-left: 11px; font-size: 14px; font-weight: 500; line-height: 39px; color: #fff; background: #3f51b5; }
.heading { font-size: 17px; line-height: 23px; text-align: center; color: #8f2450; background: #ff4081; box-shadow: inset 0 2px 2px -1px #a03070; }
.login { flex: 1; display: grid; grid-template-columns: 94px 1fr; grid-auto-rows: max-content; align-items: center; padding-right: 3px; font-size: 17px; color: #757575; }
.login > label { line-height: 36px; }
.field { min-width: 0; width: 100%; height: 27px; padding: 0; border: 0; border-bottom: 1px solid #8a8a8a; background: none; font: inherit; font-size: 16px; color: #222; }
.field.active { border-color: #ff4081; }
.field::placeholder { color: #a0a0a0; opacity: 1; }
.login .remember { grid-column: 2; display: flex; align-items: center; gap: 5px; padding-left: 2px; line-height: 24px; color: #111; }
.remember input { appearance: none; width: 13px; height: 13px; margin: 0; border: 2px solid #777; border-radius: 1px; }
.btn { grid-column: 2; height: 29px; border-radius: 2px; background: #d6d7d7; box-shadow: 0 1px 1px #c4c4c4; font-size: 17px; font-weight: 500; color: #212121; }
.signin { margin: 3px 0 0 8px; }
.quit { justify-self: end; margin-top: 8px; padding: 0 6px; }
.keys { display: flex; justify-content: center; gap: 70px; height: 34px; background: #000; }
.keys svg { width: 12px; height: 12px; fill: #fff; }

.tools { position: absolute; left: 898px; top: 65px; width: 61px; padding: 0 1px 4px 0; border: 1px solid #000; background: #efefef; }
.tools > button { width: 100%; height: 44px; }
.tools > button svg { width: 24px; height: 24px; }
.caption { display: flex; justify-content: center; gap: 17px; height: 25px; padding-top: 3px; }
.caption svg { width: 8px; height: 8px; }
.ln { fill: none; stroke: #607d8b; stroke-width: 2; }
.th { stroke-width: 1.5; }
.wd { stroke-width: 3; }
.so { fill: #607d8b; }

/* taskbar */
.taskbar { position: relative; display: flex; justify-content: space-between; height: 30px; background: #101010; color: #fff; font: 12px/30px "Open Sans", "Noto Sans", sans-serif; }
.apps, .tray { display: flex; align-items: center; }
.apps button { height: 30px; }
.sys { width: 36px; }
.apps svg, .tray svg { width: 16px; height: 16px; }
.apps svg.wide { width: 20px; }
.task { width: 28px; margin-left: 9px; border-bottom: 2px solid #fb8585; }
.task:nth-child(4) { margin-left: 6px; }
.task.green { border-color: #46e83c; background: linear-gradient(90deg, #2f5f2b 40%, #2c2c2c 40%); }
.task.current { width: 36px; margin-left: 5px; background: #343434; }
.tray button { margin-right: 8px; }
.lang { margin: 0 18px 0 2px; }
.clock { margin-right: 13px; }
.peek { width: 5px; height: 30px; border-left: 1px solid #666; }
```
